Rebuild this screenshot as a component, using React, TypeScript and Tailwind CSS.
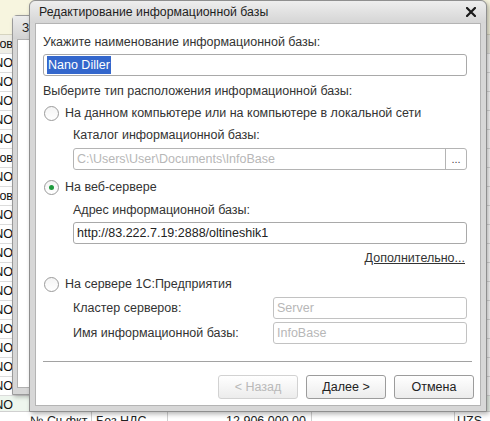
import React from 'react';

// background list rows: label for the left column of each row
const rowLabels = [
  'тов', 'NO', 'NO', 'NO', 'NO', 'NO', 'тов', 'NO', 'тов', 'NO',
  'NO', 'NO', 'NO', 'NO', 'NO', 'NO', 'NO', 'NO', 'NO', 'NO',
];

const Radio: React.FC<{ checked?: boolean; label: string }> = ({ checked, label }) => (
  <div className="flex items-center h-[16px] ml-[1px]">
    <div className="w-[15px] h-[15px] rounded-full border border-[#9a9a9a] bg-gradient-to-b from-[#f4f4f4] to-white flex items-center justify-center">
      {checked && <div className="w-[5px] h-[5px] rounded-full bg-[#1e9a3c]" />}
    </div>
    <span className="ml-[6px]">{label}</span>
  </div>
);

const Field: React.FC<{ children?: React.ReactNode; className?: string; muted?: boolean }> = ({
  children,
  className = '',
  muted,
}) => (
  <div
    className={`h-[22px] rounded-[3px] border bg-white flex items-center px-[3px] ${
      muted ? 'border-[#c2c2c2] text-[#b7b7b7]' : 'border-[#a9a9a9] text-[#222]'
    } ${className}`}
  >
    {children}
  </div>
);

const Button: React.FC<{ label: string; disabled?: boolean }> = ({ label, disabled }) => (
  <div
    className={`w-[80px] h-[24px] rounded-[3px] border flex items-center justify-center bg-gradient-to-b from-white to-[#ececec] ${
      disabled ? 'border-[#d2d2d2] text-[#b9b9b9]' : 'border-[#9c9c9c] text-[#222]'
    }`}
  >
    {label}
  </div>
);

export default function App() {
  return (
    <div className="relative w-[490px] h-[421px] overflow-hidden bg-white text-[12.5px] text-[#333] font-['Liberation_Sans',Arial,sans-serif]">
      {/* list behind the windows */}
      <div className="absolute inset-0 flex flex-col">
        <div className="h-[35px] bg-[#f7f5df] border-b border-[#d6d4c0]" />
        <div className="h-[376px] overflow-hidden flex flex-col">
          {rowLabels.map((l, i) => (
            <div
              key={i}
              className={`h-[19px] shrink-0 flex border-b border-[#dcdcdc] ${
                i === 0 ? 'bg-[#efeee6]' : i === 19 ? 'bg-[#eef6ee]' : 'bg-white'
              }`}
            >
              <div className="w-[13px] overflow-hidden flex justify-end items-center leading-none text-[#111]">
                {l}
              </div>
            </div>
          ))}
        </div>
        <div className="h-[10px] flex text-[#222] leading-none border-t border-[#d0d0d0]">
          <div className="w-[92px] pl-[30px] pt-[3px] border-r border-[#cfcfcf]">№ Сч.фкт</div>
          <div className="w-[76px] pl-[4px] pt-[3px] border-r border-[#cfcfcf]">Без НДС</div>
          <div className="w-[144px] pr-[5px] pt-[3px] text-right border-r border-[#cfcfcf]">12 906 000,00</div>
          <div className="w-[143px] border-r border-[#cfcfcf]" />
          <div className="pl-[2px] pt-[3px]">UZS</div>
        </div>
      </div>

      {/* window underneath */}
      <div className="absolute left-[12px] top-[15px] w-[120px] h-[380px] rounded-tl-[5px] border border-[#9a9a9a] bg-[#d6d6d6] flex flex-col shadow-[2px_2px_4px_rgba(0,0,0,0.25)]">
        <div className="h-[23px] pl-[9px] flex items-center text-[12px] text-[#222] bg-gradient-to-b from-[#ececec] to-[#d2d2d2]">
          Загрузка
        </div>
        <div className="flex-1 ml-[4px] mb-[6px] bg-white border border-[#b0b0b0]" />
      </div>

      {/* main dialog */}
      <div className="absolute left-[29px] top-0 w-[458px] h-[412px] rounded-t-[6px] border border-[#8f8f8f] bg-[#d7d7d7] flex flex-col shadow-[2px_2px_5px_rgba(0,0,0,0.3)]">
        <div className="h-[22px] shrink-0 flex items-center justify-between pl-[9px] pr-[10px] rounded-t-[6px] bg-gradient-to-b from-[#eeeeee] to-[#d5d5d5]">
          <span className="text-[12.3px] text-[#1e1e1e]">Редактирование информационной базы</span>
          <svg width="10" height="10" viewBox="0 0 10 10">
            <path d="M1 1L9 9M9 1L1 9" stroke="#1a1a1a" strokeWidth="2.2" strokeLinecap="square" />
          </svg>
        </div>

        <div className="flex-1 mx-[5px] mb-[5px] bg-white border border-[#b4b4b4] flex flex-col pl-[7px] pr-[6px] pt-[10px]">
          <div className="h-[16px] leading-[16px]">Укажите наименование информационной базы:</div>
          <Field className="mt-[4px] mr-[7px]">
            <span className="bg-[#3367cc] text-white px-[1px]">Nano Diller</span>
          </Field>

          <div className="mt-[7px] h-[16px] leading-[16px]">Выберите тип расположения информационной базы:</div>
          <div className="mt-[6px]">
            <Radio label="На данном компьютере или на компьютере в локальной сети" />
          </div>
          <div className="mt-[6px] ml-[30px] h-[16px] leading-[16px]">Каталог информационной базы:</div>
          <div className="mt-[5px] ml-[30px] mr-[7px] h-[22px] rounded-[3px] border border-[#b4b4b4] bg-white flex">
            <div className="flex-1 flex items-center px-[3px] text-[#b7b7b7]">C:\Users\User\Documents\InfoBase</div>
            <div className="w-[21px] border-l border-[#b4b4b4] flex items-center justify-center text-[11px] text-[#444] pt-[1px]">
              ...
            </div>
          </div>

          <div className="mt-[9px]">
            <Radio checked label="На веб-сервере" />
          </div>
          <div className="mt-[7px] ml-[30px] h-[16px] leading-[16px]">Адрес информационной базы:</div>
          <Field className="mt-[4px] ml-[30px] mr-[7px]">http://83.222.7.19:2888/oltineshik1</Field>
          <div className="mt-[6px] mr-[9px] h-[16px] leading-[16px] flex justify-end">
            <span className="underline">Дополнительно...</span>
          </div>

          <div className="mt-[10px]">
            <Radio label="На сервере 1С:Предприятия" />
          </div>
          <div className="mt-[5px] ml-[30px] mr-[7px] flex items-center">
            <span className="w-[200px]">Кластер серверов:</span>
            <Field muted className="flex-1">Server</Field>
          </div>
          <div className="mt-[3px] ml-[30px] mr-[7px] flex items-center">
            <span className="w-[200px]">Имя информационной базы:</span>
            <Field muted className="flex-1">InfoBase</Field>
          </div>

          <div className="mt-[17px] mr-[2px] h-px bg-[#a2a2a2]" />
          <div className="mt-[13px] flex justify-end gap-[8px]">
            <Button disabled label="< Назад" />
            <Button label="Далее >" />
            <Button label="Отмена" />
          </div>
        </div>
      </div>
    </div>
  );
}
